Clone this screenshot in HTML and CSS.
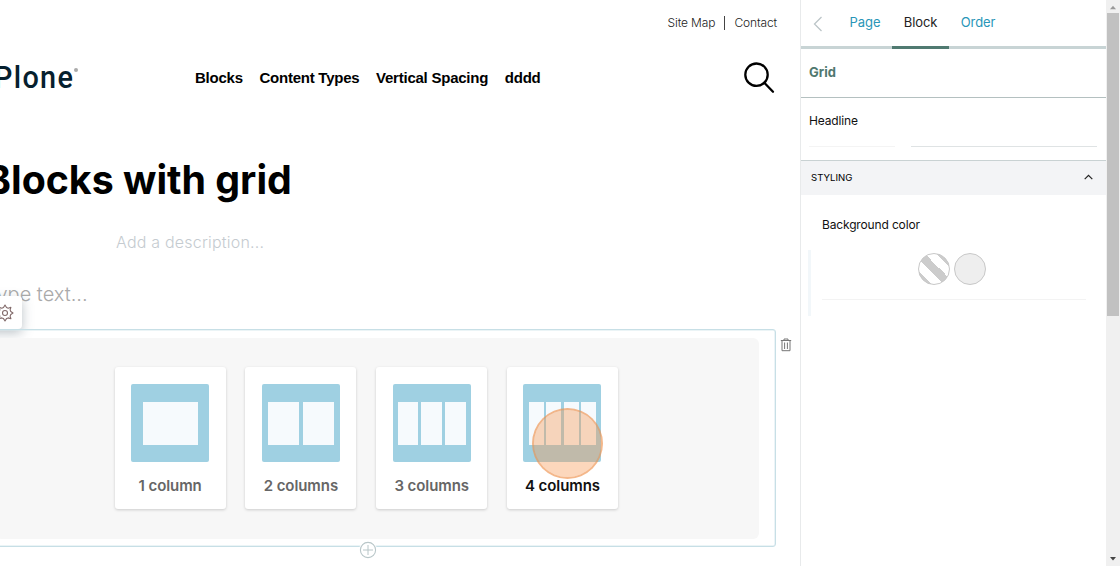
FILE: index.html
```html
<!DOCTYPE html>
<html lang="en">
<head>
<meta charset="utf-8">
<title>Blocks with grid</title>
<link rel="stylesheet" href="styles.css">
</head>
<body>
<div class="app">
  <main class="page">
    <nav class="tools"><a>Site Map</a><span class="divider"></span><a>Contact</a></nav>
    <header class="header">
      <div class="logo"><span class="logo-text">Plone</span><span class="logo-mark"></span></div>
      <nav class="nav"><a>Blocks</a><a>Content Types</a><a>Vertical Spacing</a><a>dddd</a></nav>
      <svg class="search" width="32" height="32" viewBox="0 0 32 32" fill="none" stroke="#000" stroke-width="2.3" stroke-linecap="round"><circle cx="13.5" cy="12.7" r="11.2"/><path d="M21.3 20.7l8.7 9"/></svg>
    </header>
    <h1 class="title"><span>Blocks with grid</span></h1>
    <p class="description"><span>Add a description...</span></p>
    <div class="text-block"><span class="placeholder">Type text...</span>
      <div class="toolbar">
        <svg width="18" height="18" viewBox="0 0 18 18" fill="none" stroke="#826a6a" stroke-width="1.1" stroke-linejoin="round"><path d="M9 1l1.5 2.5 1.7.7 2.7-.9-.8 2.6.7 1.6L17 9l-2.2 1.5-.7 1.6.8 2.6-2.7-.8-1.7.7L9 17l-1.5-2.4-1.7-.7-2.7.8.8-2.6-.7-1.6L1 9l2.2-1.5.7-1.6-.8-2.6 2.7.9 1.7-.7z"/><circle cx="9" cy="9" r="2.5"/></svg>
      </div>
    </div>
    <div class="grid-row">
      <section class="grid-block">
        <div class="templates">
          <button class="card"><span class="thumb c1"><i></i></span><b>1 column</b></button>
          <button class="card"><span class="thumb c2"><i></i><i></i></span><b>2 columns</b></button>
          <button class="card"><span class="thumb c3"><i></i><i></i><i></i></span><b>3 columns</b></button>
          <button class="card active"><span class="thumb c4"><i></i><i></i><i></i><i></i></span><b>4 columns</b><span class="pointer"></span></button>
        </div>
        <svg class="add" width="18" height="18" viewBox="0 0 18 18" fill="none" stroke="#b8c6c8"><circle cx="9" cy="9" r="7.6" fill="#fff" stroke-width="1.1"/><path d="M9 4v10M4 9h10"/></svg>
      </section>
      <svg class="trash" width="12" height="14" viewBox="0 0 12 14" fill="none" stroke="#777"><path d="M.8 2.5h10.4M4 2.3V1h4v1.3M2 2.5v10.2h8V2.5M4.6 4.5v6.5M7.4 4.5v6.5"/></svg>
    </div>
  </main>
  <aside class="sidebar">
    <nav class="tabs">
      <svg class="back" width="10" height="16" viewBox="0 0 10 16" fill="none" stroke="#bcc5c8" stroke-width="1.3"><path d="M8.5 1L1.5 8l7 7"/></svg>
      <a class="tab t1">Page</a><a class="tab t2">Block</a><a class="tab t3">Order</a>
    </nav>
    <h2 class="section"><span>Grid</span></h2>
    <div class="field">
      <label>Headline</label>
      <div class="lines"><span class="line-label"></span><span class="line-input"></span></div>
    </div>
    <div class="accordion"><span>STYLING</span><svg width="9" height="6" viewBox="0 0 9 6" fill="none" stroke="#222" stroke-width="1.2"><path d="M.7 5.2L4.5 1.3l3.8 3.9"/></svg></div>
    <div class="styling">
      <label>Background color</label>
      <div class="swatches">
        <div class="choices"><span class="swatch striped"></span><span class="swatch"></span></div>
      </div>
    </div>
  </aside>
  <div class="scrollbar">
    <svg width="14" height="13" viewBox="0 0 14 13"><path d="M4 9.2L7 5.8l3 3.4z" fill="#999"/></svg>
    <span class="thumbbar"></span>
    <svg class="down" width="14" height="15" viewBox="0 0 14 15"><path d="M4 6L7 9.6 10 6z" fill="#444"/></svg>
  </div>
</div>
</body>
</html>
```

FILE: styles.css
```css
* { box-sizing: border-box; }
body { margin: 0; background: #fff; color: #000; font-family: Inter, sans-serif; }
span, a, label { white-space: nowrap; }
.app { display: flex; width: 1120px; height: 566px; overflow: hidden; }
.page { width: 800px; height: 566px; overflow: hidden; display: flex; flex-direction: column; }
.tools { height: 45px; padding-right: 23px; display: flex; justify-content: flex-end; align-items: center; font-size: 12px; font-weight: 300; color: #222; letter-spacing: -.12px; }
.divider { width: 1px; height: 14px; background: #444; margin: 0 9px; }
.header { height: 66px; display: flex; align-items: center; }
.logo { width: 195px; display: flex; align-items: center; color: #06202e; }
.logo-text { width: 79px; margin: -3px 0 0 -6px; font: 500 32px/40px Roboto, sans-serif; letter-spacing: 1.5px; transform: scaleX(.9); transform-origin: 0 50%; }
.logo-mark { width: 4px; height: 4px; border-radius: 50%; background: #aaa; margin: -16px 0 0 1px; }
.nav { display: flex; gap: 16.7px; font: bold 15px/20px "Liberation Sans", Arial, sans-serif; letter-spacing: -.24px; }
.search { margin-left: auto; margin-right: 25px; }
.title { margin: 0; height: 139px; display: flex; align-items: center; font-size: 39.3px; line-height: 48px; font-weight: 700; }
.title span { margin: -1px 0 0 -15px; }
.description { margin: 0; height: 0; display: flex; align-items: center; font-size: 16px; font-weight: 300; color: #c5cbd0; letter-spacing: .21px; padding-left: 116px; transform: translateY(-8px); }
.text-block { position: relative; height: 79px; padding-top: 32px; font-size: 20px; line-height: 24px; font-weight: 300; color: #aaa; }
.placeholder { display: inline-block; margin-left: -15px; }
.toolbar { position: absolute; left: -30px; top: 46px; width: 52px; height: 33px; border-radius: 4px; background: #fff; box-shadow: 0 4px 12px rgba(60,80,95,.35); display: flex; align-items: center; justify-content: flex-end; padding-right: 8px; }
.grid-row { display: flex; align-items: flex-start; gap: 4px; }
.grid-block { position: relative; width: 781px; height: 218px; margin-left: -5px; border: 1px solid #c7dfe6; box-shadow: inset 0 0 0 .5px #d8e9ee; border-radius: 3px; padding: 8px 16px 7px 0; }
.templates { height: 201px; background: #f7f7f7; border-radius: 6px; display: flex; gap: 19.8px; padding: 29px 0 0 118.6px; }
.card { position: relative; width: 111px; height: 142px; flex: none; border: 0; border-radius: 3px; background: #fff; box-shadow: 0 1px 3px rgba(0,0,0,.18); padding: 17px 0 0; display: flex; flex-direction: column; align-items: center; color: #666; font-family: inherit; }
.card b { font-size: 15px; line-height: 20px; font-weight: 600; margin-top: 14px; letter-spacing: -.08px; white-space: nowrap; }
.card.active { color: #111; }
.thumb { width: 78px; height: 78px; border-radius: 2px; background: #9fd0e2; display: flex; justify-content: center; align-items: flex-start; padding-top: 17.5px; }
.thumb i { height: 43.5px; background: #f6fafd; }
.c1 i { width: 55px; }
.c2 { gap: 3.5px; }
.c2 i { width: 31px; }
.c3 { gap: 3px; }
.c3 i { width: 20.7px; }
.c4 { gap: 2.3px; }
.c4 i { width: 15px; }
.pointer { position: absolute; left: 25px; top: 41px; width: 71px; height: 71px; border-radius: 50%; border: 2.5px solid rgba(238,145,75,.65); background: rgba(246,150,80,.38); background-clip: padding-box; }
.add { position: absolute; left: 363px; bottom: -13px; background: #fff; border-radius: 50%; }
.trash { margin-top: 9px; }
.sidebar { width: 306px; border-left: 1px solid #e8eaeb; }
.tabs { height: 49px; border-bottom: 3px solid #c8d4d5; display: flex; align-items: flex-start; }
.back { margin: 16px 0 0 12px; }
.tab { height: 49px; font: 400 13px/44px Inter, sans-serif; letter-spacing: -.1px; color: #2996b8; text-align: center; }
.t1 { width: 56px; margin-left: 14px; }
.t2 { width: 57px; margin-left: -1px; color: #222; border-bottom: 3px solid #507a71; }
.t3 { width: 58px; }
.section { margin: 0; height: 49px; border-bottom: 1px solid #b4c0c0; padding: 0 8px; font: 700 13px/47px Inter, sans-serif; color: #50786f; }
.field { height: 62px; padding: 13px 9px 0 8px; }
label { display: block; font: 400 12px/20px Inter, sans-serif; letter-spacing: -.15px; color: #111; }
.lines { display: flex; gap: 16px; margin-top: 15px; }
.line-label { width: 86px; height: 1px; background: #f4f4f4; }
.line-input { flex: 1; height: 1px; background: #dfe3e4; }
.accordion { height: 35px; background: #f3f4f6; border-top: 1px solid #c9d2d3; padding: 0 13px 0 10px; display: flex; align-items: center; justify-content: space-between; font: 400 9.6px/14px Inter, sans-serif; }
.accordion svg { margin-top: -2px; }
.styling { padding: 20px 20px 0 7px; }
.styling label { padding-left: 14px; }
.swatches { margin-top: 15px; height: 66px; border-left: 3px solid #f2f7fa; padding-left: 11px; }
.choices { height: 50px; border-bottom: 1px solid #f3f3f3; display: flex; gap: 4px; padding: 3px 0 0 96px; }
.swatch { width: 32px; height: 32px; border-radius: 50%; border: 1.4px solid #c8c8c8; background: #eee; }
.striped { background: linear-gradient(45deg, #ccc 21%, #fff 21% 41%, #ccc 41% 60%, #fff 60% 79%, #ccc 79%); }
.scrollbar { width: 14px; height: 566px; background: #f0f0f0; display: flex; flex-direction: column; align-items: center; }
.thumbbar { width: 12px; height: 303px; background: #c1c1c1; }
.down { margin-top: auto; }
```
